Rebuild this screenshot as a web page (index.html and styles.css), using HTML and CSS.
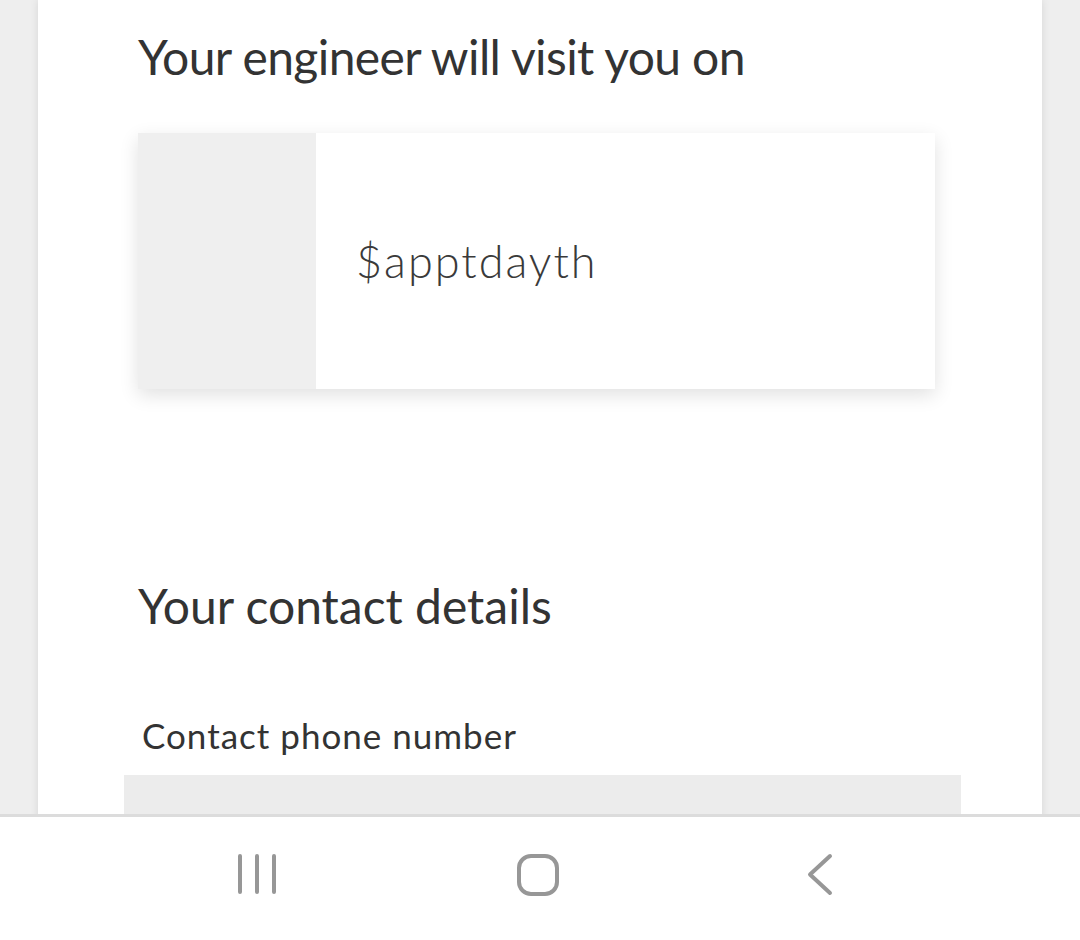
FILE: index.html
```html
<!DOCTYPE html>
<html lang="en">
<head>
  <meta charset="UTF-8">
  <title>Your appointment</title>
  <meta name="viewport" content="width=device-width, initial-scale=1">
  <link rel="stylesheet" href="styles.css">
</head>
<body>

  <div class="screen">
    <div class="page">
      <h1 class="title visit-title">Your engineer will visit you on</h1>

      <div class="appt">
        <div class="appt-side"></div>
        <div class="appt-day">$apptdayth</div>
      </div>

      <h1 class="title contact-title">Your contact details</h1>

      <label class="label" for="phone">Contact phone number</label>
      <input type="text" id="phone" class="field">
    </div>
  </div>

  <div class="navbar">
    <div class="nav-slot">
      <svg width="44" height="44" viewBox="0 0 44 44">
        <path d="M5 3v36M22 3v36M39 3v36" stroke="#979797" stroke-width="4" stroke-linecap="round" fill="none"/>
      </svg>
    </div>
    <div class="nav-slot">
      <svg width="44" height="44" viewBox="0 0 44 44">
        <rect x="3" y="3" width="38" height="38" rx="12" stroke="#979797" stroke-width="4" fill="none"/>
      </svg>
    </div>
    <div class="nav-slot">
      <svg width="44" height="44" viewBox="0 0 44 44">
        <path d="M33 3L13 21.5L33 40" stroke="#979797" stroke-width="4" stroke-linecap="round" stroke-linejoin="round" fill="none"/>
      </svg>
    </div>
  </div>

</body>
</html>
```

FILE: styles.css
```css
html, body {
  margin: 0;
  height: 100%;
}

body {
  font-family: 'Lato', 'Noto Sans', sans-serif;
  background-color: #eeeeee;
  color: #333333;
  display: flex;
  flex-direction: column;
  height: 940px;
  overflow: hidden;
}

.screen {
  flex: 1;
  overflow: hidden;
  padding: 0 38px;
}

.page {
  background: #ffffff;
  height: 100%;
  padding: 27px 119px 0 100px;
  box-shadow: 0 0 8px rgba(0,0,0,0.1);
}

.title {
  font-size: 48px;
  font-weight: 400;
  margin: 0;
  line-height: 60px;
  color: #333333;
}

.visit-title {
  letter-spacing: -0.6px;
}

.appt {
  display: flex;
  width: 797px;
  height: 256px;
  margin-top: 46px;
  box-shadow: 0 6px 18px rgba(0,0,0,0.12);
}

.appt-side {
  width: 178px;
  background: #efefef;
}

.appt-day {
  flex: 1;
  background: #ffffff;
  display: flex;
  align-items: center;
  padding-left: 40px;
  font-size: 45px;
  font-weight: 300;
  letter-spacing: 2px;
  color: #3a3a3a;
}

.contact-title {
  margin-top: 187px;
}

.label {
  display: block;
  font-size: 35px;
  letter-spacing: 1px;
  margin: 77px 0 0 4px;
  line-height: 44px;
}

.field {
  display: block;
  width: 837px;
  height: 42px;
  margin: 18px 0 0 -14px;
  border: none;
  background: #ececec;
  box-sizing: border-box;
}

.navbar {
  box-sizing: border-box;
  height: 126px;
  flex-shrink: 0;
  background: #ffffff;
  border-top: 3px solid #dcdcdc;
  display: flex;
  justify-content: center;
  align-items: center;
  padding: 0 4px 7px 0;
}

.nav-slot {
  width: 281px;
  display: flex;
  justify-content: center;
}
```
